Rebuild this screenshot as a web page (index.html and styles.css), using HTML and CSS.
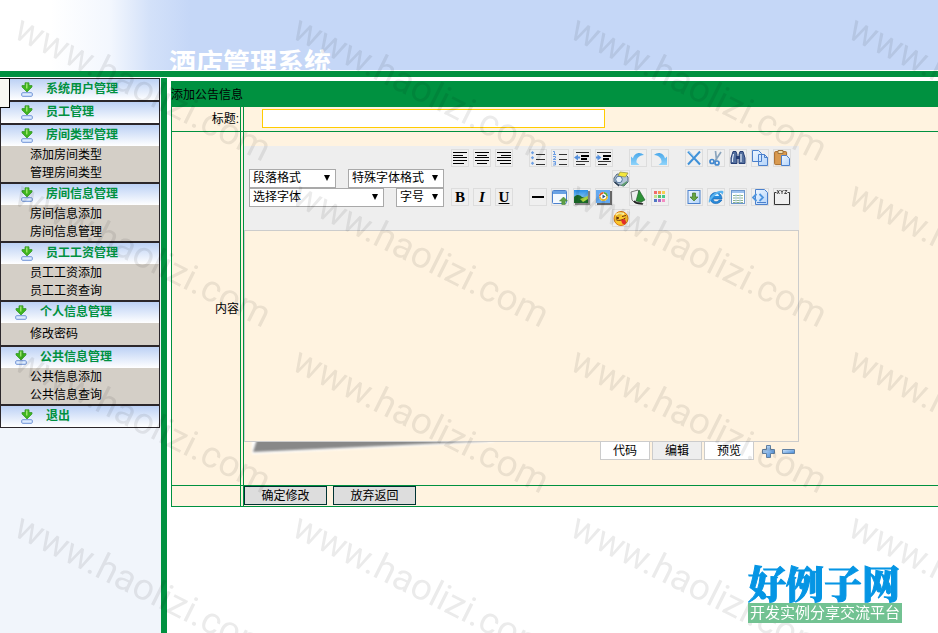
FILE: index.html
```html
<!DOCTYPE html>
<html lang="zh-CN">
<head>
<meta charset="utf-8">
<title>酒店管理系统</title>
<link rel="stylesheet" href="styles.css">
</head>
<body>
<svg class="defs" width="0" height="0" aria-hidden="true">
  <defs>
    <linearGradient id="blue" x1="0" y1="0" x2="1" y2="1"><stop offset="0" stop-color="#eef6ff"/><stop offset="1" stop-color="#b4d4fa"/></linearGradient>
    <linearGradient id="sky" x1="0" y1="0" x2="0" y2="1"><stop offset="0" stop-color="#2a8fe8"/><stop offset="1" stop-color="#b8e6fb"/></linearGradient>
    <linearGradient id="arc" x1="0" y1="0" x2="0" y2="1"><stop offset="0" stop-color="#4aa8ea"/><stop offset="1" stop-color="#8fd4fb"/></linearGradient>
    <linearGradient id="steel" x1="0" y1="0" x2="1" y2="1"><stop offset="0" stop-color="#d4e8fb"/><stop offset="1" stop-color="#3f86d6"/></linearGradient>
    <filter id="soft" x="-5%" y="-50%" width="110%" height="200%"><feGaussianBlur stdDeviation="1.2"/></filter>
    <symbol id="down" viewBox="0 0 12 15">
      <path d="M4 .8h4v2.700h3V5L6 10 1 5V3.500h3z" fill="#3fb51f" stroke="#3a9a30" stroke-width=".8"/>
      <path d="M5 1.500h1.500v5H5z" fill="#9be56c"/>
      <rect x=".7" y="10.700" width="10.600" height="3.600" rx="1" fill="#dcebff" stroke="#6f93d6"/>
    </symbol>
    <text id="mark" class="mark" transform="rotate(26.5)">www.haolizi.com</text>
    <g id="mark-row"><use href="#mark" x="0"/><use href="#mark" transform="translate(278 0)"/><use href="#mark" transform="translate(556 0)"/><use href="#mark" transform="translate(834 0)"/></g>
  </defs>
</svg>

<header class="banner"><h1>酒店管理系统</h1></header>

<div class="body">
  <nav class="sidebar">
    <span class="handle"></span>
    <section class="group"><h2><svg><use href="#down"/></svg><a href="#">系统用户管理</a></h2></section>
    <section class="group"><h2><svg><use href="#down"/></svg><a href="#">员工管理</a></h2></section>
    <section class="group"><h2><svg><use href="#down"/></svg><a href="#">房间类型管理</a></h2>
      <ul><li><a href="#">添加房间类型</a></li><li><a href="#">管理房间类型</a></li></ul></section>
    <section class="group"><h2><svg><use href="#down"/></svg><a href="#">房间信息管理</a></h2>
      <ul><li><a href="#">房间信息添加</a></li><li><a href="#">房间信息管理</a></li></ul></section>
    <section class="group"><h2><svg><use href="#down"/></svg><a href="#">员工工资管理</a></h2>
      <ul><li><a href="#">员工工资添加</a></li><li><a href="#">员工工资查询</a></li></ul></section>
    <section class="group near"><h2><svg><use href="#down"/></svg><a href="#">个人信息管理</a></h2>
      <ul class="single"><li><a href="#">修改密码</a></li></ul></section>
    <section class="group near"><h2><svg><use href="#down"/></svg><a href="#">公共信息管理</a></h2>
      <ul><li><a href="#">公共信息添加</a></li><li><a href="#">公共信息查询</a></li></ul></section>
    <section class="group"><h2><svg><use href="#down"/></svg><a href="#">退出</a></h2></section>
  </nav>

  <main class="content">
    <form class="notice">
      <h2 class="caption">添加公告信息</h2>
      <div class="row">
        <label class="name" for="title">标题:</label>
        <div class="field title-field"><input id="title" type="text"></div>
      </div>
      <div class="row">
        <label class="name" for="text">内容</label>
        <div class="field editor-field">
          <div class="editor">
            <div class="toolbar">
              <div class="picks">
                <div class="pick-row">
                  <span class="pick paragraph"><select aria-label="段落格式"><option>段落格式</option></select></span>
                  <span class="pick special"><select aria-label="特殊字体格式"><option>特殊字体格式</option></select></span>
                </div>
                <div class="pick-row">
                  <span class="pick font"><select aria-label="选择字体"><option>选择字体</option></select></span>
                  <span class="pick size"><select aria-label="字号"><option>字号</option></select></span>
                </div>
              </div>
              <div class="tools">
                <div class="tool-row">
                  <button type="button" class="tool" aria-label="左对齐"><svg viewBox="0 0 16 16"><path d="M1 2.500h14M1 5.500h10M1 7.500h14M1 10.500h14M1 13.500h11" stroke="#000"/></svg></button>
                  <button type="button" class="tool" aria-label="居中"><svg viewBox="0 0 16 16"><path d="M1 2.500h14M3 5.500h10M1 7.500h14M1 10.500h14M3 13.500h10" stroke="#000"/></svg></button>
                  <button type="button" class="tool" aria-label="右对齐"><svg viewBox="0 0 16 16"><path d="M1 2.500h14M5 5.500h10M1 7.500h14M1 10.500h14M4 13.500h11" stroke="#000"/></svg></button>
                  <span class="gap"></span>
                  <button type="button" class="tool" aria-label="项目符号"><svg viewBox="0 0 16 16"><path d="M6 4.500h9M6 9.500h9M6 14.500h9" stroke="#333"/><path d="M2.500 1l1.700 1.700-1.700 1.700L.8 2.700zM2.500 6l1.700 1.700-1.700 1.700L.8 7.700zM2.500 11.500l1.700 1.700-1.700 1.700-1.700-1.700z" fill="#6d9fe4"/></svg></button>
                  <button type="button" class="tool" aria-label="编号"><svg viewBox="0 0 16 16"><path d="M7 4.500h8M7 9.500h8M7 14.500h8" stroke="#333"/><path d="M1 1.500h1.500v3M1 4.500h3M1 6.500h2.500v1.500L1 9.500h3M1 11.500h2.500v3.500H1M1.500 13.200h2" fill="none" stroke="#6d9fe4"/></svg></button>
                  <button type="button" class="tool" aria-label="减少缩进"><svg viewBox="0 0 16 16"><path d="M2 2.500h13M2 11.500h13M2 14.500h9" stroke="#333"/><path d="M7 6h8M7 9h6" stroke="#000" stroke-width="2"/><path d="M0 7.500l4-3v2h2v2H4v2z" fill="#5590dc"/></svg></button>
                  <button type="button" class="tool" aria-label="增加缩进"><svg viewBox="0 0 16 16"><path d="M1 2.500h14M2 11.500h13M2 14.500h9" stroke="#333"/><path d="M7 6h8M7 9h6" stroke="#000" stroke-width="2"/><path d="M5.500 7.500l-4-3v2H0v2h1.500v2z" fill="#5590dc"/></svg></button>
                  <span class="gap"></span>
                  <button type="button" class="tool" aria-label="撤销"><svg viewBox="0 0 16 16"><path d="M1 6.500V15h8.500l-3-2.500C6 8.500 9 5.500 14 5 10 1 4 3 3 8.500z" fill="url(#arc)"/></svg></button>
                  <button type="button" class="tool" aria-label="重做"><svg viewBox="0 0 16 16"><path d="M15 6.500V15H6.500l3-2.500C10 8.500 7 5.500 2 5c4-4 10-2 11 3.500z" fill="url(#arc)"/></svg></button>
                  <span class="gap"></span>
                  <button type="button" class="tool" aria-label="删除"><svg viewBox="0 0 16 16"><path d="M2 1.500l12 13M14 1.500L2 14.500" stroke="#3f91d8" stroke-width="2"/><path d="M2 1l6 6" stroke="#86c1ee"/></svg></button>
                  <button type="button" class="tool" aria-label="剪切"><svg viewBox="0 0 16 16"><path d="M7.500 1l1 9M13 2L7 11" stroke="#8aa4bd" stroke-width="1.700"/><circle cx="4" cy="11.500" r="2" fill="none" stroke="#4288cf" stroke-width="1.700"/><circle cx="9" cy="13" r="2" fill="none" stroke="#4288cf" stroke-width="1.700"/></svg></button>
                  <button type="button" class="tool" aria-label="查找"><svg viewBox="0 0 16 16"><path d="M3 1.500h3l1 3v9H1V8zM10 1.500h3L15 8v5.500H9v-9z" fill="#54709f" stroke="#273f75"/><path d="M6 6h4v3H6z" fill="#273f75"/><path d="M3.500 4L2.500 9v3M11 4v8" stroke="#e2ebfa" stroke-width="1.200" fill="none"/></svg></button>
                  <button type="button" class="tool" aria-label="复制"><svg viewBox="0 0 16 16"><path d="M.5.500h6l3 3v8h-9zM6.500 4.500h6l3 3v8h-9z" fill="url(#blue)" stroke="#4b80cc"/><path d="M12.500 4.500v3h3" fill="none" stroke="#4b80cc"/></svg></button>
                  <button type="button" class="tool" aria-label="粘贴"><svg viewBox="0 0 16 16"><rect x=".6" y="1.600" width="12" height="13" rx="1" fill="#d99a50" stroke="#a86d2d"/><path d="M4 .5h5v3H4z" fill="#f3dfae" stroke="#9c7443"/><path d="M7.500 5.500h5l3 3v7h-8z" fill="url(#blue)" stroke="#4b80cc"/></svg></button>
                  <button type="button" class="tool" aria-label="打印预览"><svg viewBox="0 0 16 16"><path d="M1 7l3-4 9 1 2 2v5l-4 4-8-2-2-2z" fill="#b4c6d8" stroke="#52677d"/><path d="M7 1l8 1-2.500 4L5 5z" fill="#f4e83c" stroke="#8f8d44" stroke-width=".7"/><circle cx="6" cy="8.500" r="3.300" fill="#e4f0fc" stroke="#52729a"/><path d="M8 14l6-4v2l-4 3.500z" fill="#5d9b6c"/><path d="M2 11l4 4" stroke="#2f4257" stroke-width="1.500"/></svg></button>
                </div>
                <div class="tool-row">
                  <button type="button" class="tool letter" aria-label="粗体"><b>B</b></button>
                  <button type="button" class="tool letter" aria-label="斜体"><i>I</i></button>
                  <button type="button" class="tool letter" aria-label="下划线"><u>U</u></button>
                  <span class="gap"></span>
                  <button type="button" class="tool" aria-label="水平线"><svg viewBox="0 0 16 16"><path d="M2 8h12" stroke="#000" stroke-width="2"/></svg></button>
                  <button type="button" class="tool" aria-label="新窗口"><svg viewBox="0 0 16 16"><rect x=".5" y="1.500" width="14" height="13" rx="1" fill="#f4f9ff" stroke="#4b80cc"/><path d="M1 2h13v3H1z" fill="#6aa2e4"/><path d="M11.500 8l4 4h-2.300v3.500H9.800V12H7.500z" fill="#5fa046" stroke="#3b7c2c" stroke-width=".5"/></svg></button>
                  <button type="button" class="tool" aria-label="图片"><svg viewBox="0 0 16 16"><path d="M1 2h15v14H1z" fill="#888"/><path d="M0 1h14v13H0z" fill="url(#sky)"/><path d="M0 8c3-3 6-2 8 0l6 2v4H0z" fill="#1b6b29"/><path d="M6 10l8-3v3l-5 3z" fill="#abd540"/></svg></button>
                  <button type="button" class="tool" aria-label="媒体"><svg viewBox="0 0 16 16"><path d="M1 2h15v14H1z" fill="#666"/><path d="M0 1h14v13H0z" fill="#64a9ef"/><circle cx="7.500" cy="7.500" r="4.500" fill="#fff"/><path d="M7.500 3a4.500 4.500 0 0 1 4.500 4.500H9z" fill="#55a637"/><path d="M12 7.500a4.500 4.500 0 0 1-9 0h2z" fill="#eab926"/><path d="M3 7.500A4.500 4.500 0 0 1 7.500 3v2z" fill="#e15727"/><circle cx="7.500" cy="7.500" r="2.700" fill="#fff"/><path d="M6.500 5.500l3 2-3 2z" fill="#25538f"/></svg></button>
                  <span class="gap"></span>
                  <button type="button" class="tool" aria-label="文字颜色"><svg viewBox="0 0 16 16"><path d="M1 3l7-2 4 12-7 1-3-3z" fill="#eee" stroke="#777"/><path d="M9 1l6 10-4 2-5-1z" fill="#2c9135" stroke="#1b5926" stroke-width=".6"/><path d="M4 12c3 4 7 2 9 3" stroke="#222" stroke-width="1.500" fill="none"/></svg></button>
                  <button type="button" class="tool" aria-label="背景颜色"><svg viewBox="0 0 16 16"><path d="M2 2h3v3H2z" fill="#f06a6a"/><path d="M6 2h3v3H6z" fill="#f39a4e"/><path d="M10 2h3v3h-3z" fill="#f7cf50"/><path d="M2 6h3v3H2z" fill="#c2e28c"/><path d="M6 6h3v3H6z" fill="#54c468"/><path d="M10 6h3v3h-3z" fill="#43c888"/><path d="M2 10h3v3H2z" fill="#4e76c4"/><path d="M6 10h3v3H6z" fill="#a66bc4"/><path d="M10 10h3v3h-3z" fill="#f48cc0"/></svg></button>
                  <span class="gap"></span>
                  <button type="button" class="tool" aria-label="上传"><svg viewBox="0 0 16 16"><rect x="2" y="1.500" width="12" height="13" fill="url(#blue)" stroke="#4b80cc"/><path d="M6.500 4h3v4H12l-4 4-4-4h2.500z" fill="#65a541" stroke="#3e7628" stroke-width=".7"/></svg></button>
                  <button type="button" class="tool" aria-label="链接"><svg viewBox="0 0 16 16"><path d="M14 11c-4 6-12 4-12-2 0-7 12-8 12 1H5c1 4 5 3 6 1z" fill="#278bdb" stroke="#145fae" stroke-width=".6"/><path d="M5.500 7c1-3 5-3 5.500 0z" fill="#dff3ff"/><path d="M1 14C-1 9 9 0 15 2c1 1 0 3-1 4 0-5-8 0-11 5z" fill="#5ab3ef"/></svg></button>
                  <button type="button" class="tool" aria-label="表格"><svg viewBox="0 0 16 16"><rect x="1.500" y="1.500" width="13" height="13" fill="#fff" stroke="#6d96cd"/><path d="M2 2h12v2H2z" fill="#9ec2ef"/><path d="M3 6.500h10M3 9h10M3 11.500h10M3 13.500h10" stroke="#8bb38b"/><path d="M6 5v9M10 5v9" stroke="#c1d9f4"/></svg></button>
                  <button type="button" class="tool" aria-label="源代码"><svg viewBox="0 0 16 16"><path d="M3.500.500h9l3 3v12h-12z" fill="url(#blue)" stroke="#4b80cc"/><path d="M4.500 5L1 8.500 4.500 12M7.500 5L11 8.500 7.500 12" fill="none" stroke="#4d94df" stroke-width="1.800"/><path d="M5 13.500h9" stroke="#4b80cc"/></svg></button>
                  <button type="button" class="tool" aria-label="字段"><svg viewBox="0 0 16 16"><path d="M2.500 3.500h-2v12h15v-12h-2" fill="none" stroke="#333"/><path d="M3 1l2.500 4M5.500 1L3 5M6.500 1L8 3l1.500-2M8 3v2M10.500 1.500h2.500L10.500 4.500h2.500" fill="none" stroke="#222" stroke-width=".8"/></svg></button>
                  <button type="button" class="tool" aria-label="表情"><svg viewBox="0 0 16 16"><circle cx="8" cy="8.500" r="7" fill="#fbc62b" stroke="#dc7913"/><path d="M3 5c1-2 5-2 8-1" stroke="#fff1a0" stroke-width="2" fill="none"/><path d="M3 7l3 1-3 1M9 6.500l4-1M3.500 10c3 1 6 0 9-2" stroke="#6b3510" fill="none"/><path d="M8 10l4-1 1 3c0 3-3 3-4 1z" fill="#e22d2d"/></svg></button>
                </div>
              </div>
            </div>
            <textarea id="text"></textarea>
            <div class="foot">
              <svg class="shadow" viewBox="0 0 248 18"><path d="M4 -6H246V0L4 12Z" fill="#fff" filter="url(#soft)"/><path d="M10 -6H240V-1L5 10Z" fill="#888" filter="url(#soft)"/></svg>
              <div class="modes">
                <button type="button" class="mode">代码</button>
                <button type="button" class="mode current">编辑</button>
                <button type="button" class="mode">预览</button>
              </div>
              <button type="button" class="resize" aria-label="加高"><svg viewBox="0 0 14 14"><path d="M4.500.500h4v4h4v4h-4v4h-4v-4h-4v-4h4z" fill="url(#steel)" stroke="#6080a2"/></svg></button>
              <button type="button" class="resize" aria-label="减高"><svg viewBox="0 0 14 14"><path d="M.5 4.500h12v4H.5z" fill="url(#steel)" stroke="#6080a2"/></svg></button>
            </div>
          </div>
        </div>
      </div>
      <div class="row">
        <span class="name"></span>
        <div class="field actions">
          <button type="submit">确定修改</button>
          <button type="reset">放弃返回</button>
        </div>
      </div>
    </form>
  </main>
</div>

<svg class="marks" aria-hidden="true">
  <use href="#mark-row" x="12" y="37"/>
  <use href="#mark-row" x="12" y="203"/>
  <use href="#mark-row" x="12" y="369"/>
  <use href="#mark-row" x="12" y="535"/>
</svg>

<aside class="logo"><strong>好例子网</strong><span>开发实例分享交流平台</span></aside>
</body>
</html>
```
FILE: styles.css
```css
* { box-sizing: border-box; }

body {
  margin: 0;
  min-height: 100vh;
  display: flex;
  flex-direction: column;
  overflow: hidden;
  background: #fff;
  color: #000;
  font: 12px/18px "Liberation Sans", "Noto Sans CJK SC", sans-serif;
}

h1, h2, ul { margin: 0; padding: 0; list-style: none; }
a { color: inherit; text-decoration: none; }
button, input, select, textarea { font: inherit; color: inherit; margin: 0; border-radius: 0; }
.defs { position: absolute; }

.banner {
  height: 77px;
  padding: 42px 0 0 169px;
  border-bottom: 6px solid #009140;
  background: linear-gradient(90deg, #fff 50px, #f3f7fe 110px, #d3e1f9 150px, #c5d7f7 190px);
  box-shadow: inset 0 -1px #fff;
  overflow: hidden;
}
.banner h1 {
  height: 28px;
  overflow: hidden;
  color: #fff;
  font-size: 27px;
  line-height: 44px;
}

.body { flex: 1; display: flex; padding-top: 1px; }

.sidebar {
  position: relative;
  flex: none;
  width: 167px;
  padding-right: 1px;
  border-right: 6px solid #009140;
  background: #f1f5fb;
}
.handle {
  position: absolute;
  left: 0;
  top: 0;
  width: 10px;
  height: 30px;
  border: 1px solid #000;
  border-left: 0;
  background: #f8f8f2;
}
.group { border: 1px solid #2b272b; background: #d4cfc7; }
.group h2 {
  display: flex;
  align-items: flex-start;
  gap: 13px;
  height: 21px;
  padding-left: 20px;
  background: linear-gradient(#bcd1f5, #fff);
  color: #009140;
  font-size: 12px;
  line-height: 21px;
}
.near h2 { padding-left: 14px; }
.group h2 svg { width: 12px; height: 15px; margin-top: 3px; }
.group li { padding-left: 29px; }
.single { padding: 2px 0; }

.content { flex: 1; min-width: 0; padding: 3px 0 0 4px; }
.caption {
  height: 26px;
  background: #009140;
  font-size: 12px;
  font-weight: normal;
  line-height: 28px;
}
.row {
  display: grid;
  grid-template-columns: 69px 1fr;
  column-gap: 2px;
  border-left: 1px solid #009140;
  border-bottom: 1px solid #009140;
  background: #fff3e0;
}
.name {
  display: flex;
  align-items: center;
  justify-content: flex-end;
  padding-right: 1px;
  border-right: 1px solid #009140;
}
.field { border-left: 1px solid #009140; min-width: 0; }
.title-field { padding: 2px 0 3px 18px; }
.title-field input {
  display: block;
  width: 343px;
  max-width: 100%;
  height: 19px;
  border: 1px solid #fc0;
  background: #fff;
}
.editor-field { padding: 14px 0 24px; }
.editor { width: 555px; max-width: 100%; }

.toolbar {
  display: flex;
  gap: 7px;
  padding: 3px 5px;
  background: #eee;
}
.picks { padding-top: 20px; width: 195px; }
.pick-row { display: flex; justify-content: space-between; }
.pick { position: relative; }
.pick::after {
  content: "";
  position: absolute;
  right: 6px;
  top: 6px;
  border: solid transparent;
  border-width: 6px 3px 0;
  border-top-color: #000;
  pointer-events: none;
}
.pick select {
  display: block;
  appearance: none;
  width: 100%;
  height: 19px;
  padding: 0 3px;
  border: 1px solid #a9a9a9;
  background: #fff;
  line-height: 17px;
}
.paragraph { width: 87px; }
.special { width: 96px; }
.font { width: 135px; }
.size { width: 48px; }

.tools { width: 340px; }
.tool-row {
  display: flex;
  flex-wrap: wrap;
  justify-content: center;
  gap: 3px 4px;
}
.tool {
  width: 18px;
  height: 18px;
  padding: 0;
  border: 1px solid #ddd;
  background: #efefef;
}
.tool svg { display: block; width: 16px; height: 16px; }
.letter { font: bold 15px/16px "Liberation Serif", serif; }
.gap { width: 8px; }

.editor textarea {
  display: block;
  width: 100%;
  height: 212px;
  border: 1px solid #ccc;
  background: #fff3e0;
  resize: none;
}
.foot { display: flex; align-items: flex-start; height: 19px; padding-right: 3px; }
.shadow { width: 248px; height: 18px; margin-left: 4px; margin-right: auto; }
.modes { display: flex; gap: 2px; margin-right: 8px; }
.mode {
  width: 50px;
  height: 18px;
  padding: 0;
  border: 1px solid #ccc;
  border-top: 0;
  background: #fff;
  line-height: 16px;
}
.mode.current { background: #eee; }
.resize { width: 14px; height: 14px; margin-top: 3px; margin-right: 6px; padding: 0; border: 0; background: none; }
.resize:last-child { margin-right: 0; }
.resize svg { display: block; width: 14px; height: 14px; }

.actions { display: flex; gap: 6px; padding-bottom: 1px; }
.actions button {
  width: 83px;
  height: 19px;
  padding: 0;
  border: 1px solid #033;
  background: #ddd;
  line-height: 16px;
}

.marks {
  position: fixed;
  inset: 0;
  width: 100%;
  height: 100%;
  pointer-events: none;
}
.mark { font: 37px Roboto, sans-serif; fill: #000; opacity: .08; }

.logo {
  position: fixed;
  right: 36px;
  bottom: 10px;
  display: flex;
  flex-direction: column;
  white-space: nowrap;
}
.logo strong {
  color: #0595e4;
  font: 900 38px/42px "Noto Serif CJK SC", "Noto Sans CJK SC", serif;
  -webkit-text-stroke: 1px #0595e4;
}
.logo span {
  padding: 0 2px;
  background: #72c292;
  color: #fff;
  font-size: 15px;
  line-height: 20px;
}
```
